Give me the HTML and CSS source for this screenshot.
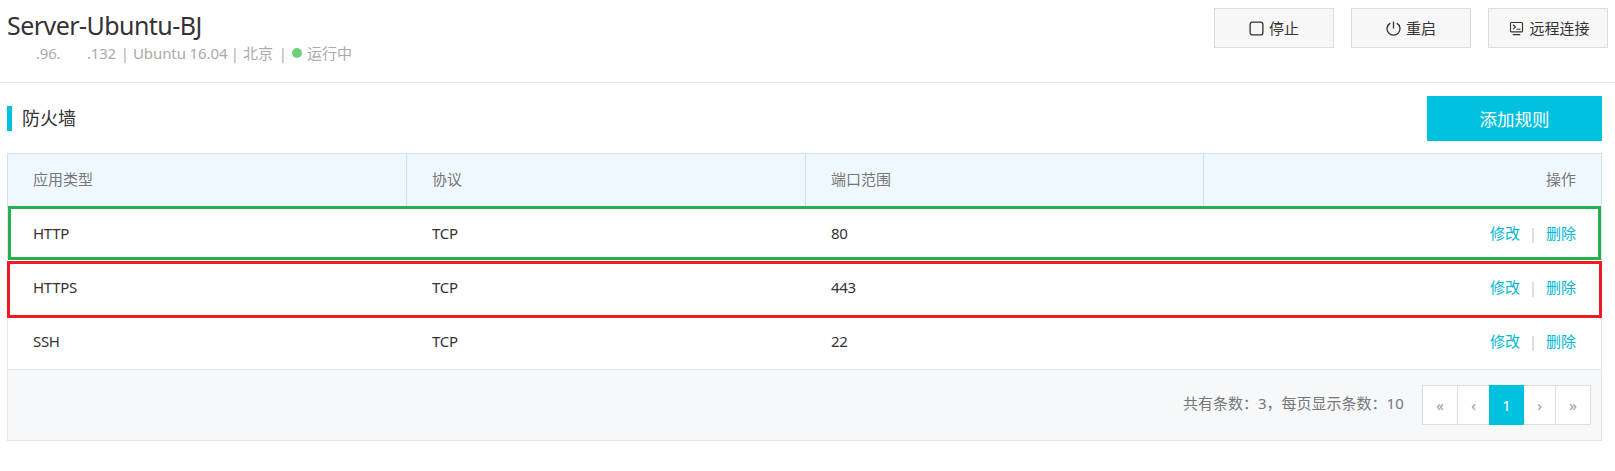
FILE: index.html
```html
<!DOCTYPE html>
<html lang="zh-CN">
<head>
<meta charset="utf-8">
<title>Server-Ubuntu-BJ</title>
<link rel="stylesheet" href="styles.css">
</head>
<body>
<header class="server">
  <div class="server-info">
    <h1 class="server-name">Server-Ubuntu-BJ</h1>
    <div class="server-meta">
      <span class="ip-a">.96.</span><span class="ip-b">.132</span><span class="bar">|</span><span class="os">Ubuntu 16.04</span><span class="bar">|</span><span class="region">北京</span><span class="bar">|</span><i class="dot"></i><span>运行中</span>
    </div>
  </div>
  <div class="server-actions">
    <button class="btn"><svg class="icon" viewBox="0 0 16 16"><rect x="1.2" y="1.2" width="13.6" height="13.6" rx="2.4"/></svg><span>停止</span></button>
    <button class="btn"><svg class="icon" viewBox="0 0 16 16"><path d="M8 .5v7.5M4.6 2.2a6.9 6.9 0 1 0 6.8 0"/></svg><span>重启</span></button>
    <button class="btn remote"><svg class="icon thin" viewBox="0 0 16 16"><rect x="1.6" y="1.6" width="12.8" height="10" rx="1"/><path d="M4.3 4l2.6 2.4-2.6 2.3M8 8.8h4.2M4 14.5h8"/></svg><span>远程连接</span></button>
  </div>
</header>
<main class="firewall">
  <div class="section-head">
    <h2 class="section-title">防火墙</h2>
    <button class="btn-add">添加规则</button>
  </div>
  <div class="rules">
    <div class="row head"><div>应用类型</div><div>协议</div><div>端口范围</div><div>操作</div></div>
    <div class="row mark-green"><div>HTTP</div><div>TCP</div><div>80</div><div class="ops"><a>修改</a><i>|</i><a>删除</a></div></div>
    <div class="row mark-red"><div>HTTPS</div><div>TCP</div><div>443</div><div class="ops"><a>修改</a><i>|</i><a>删除</a></div></div>
    <div class="row"><div>SSH</div><div>TCP</div><div>22</div><div class="ops"><a>修改</a><i>|</i><a>删除</a></div></div>
    <div class="foot">
      <span class="count">共有条数：3，每页显示条数：10</span>
      <div class="pager"><a class="wide">«</a><a>‹</a><a class="current">1</a><a>›</a><a class="wide">»</a></div>
    </div>
  </div>
</main>
</body>
</html>
```
FILE: styles.css
```css
* { box-sizing: border-box; }
body {
  margin: 0;
  background: #fff;
  color: #333;
  font: 400 15px/20px "Noto Sans", "Noto Sans CJK SC", sans-serif;
}
h1, h2 { margin: 0; font-weight: 400; }
i { font-style: normal; }
button { font: inherit; padding: 0; }

.server {
  display: flex;
  justify-content: space-between;
  height: 83px;
  padding: 8px 7px 0;
  border-bottom: 1px solid #e1e9f0;
}
.server-name {
  height: 34px;
  font-size: 25px;
  line-height: 35px;
  letter-spacing: -.55px;
}
.server-meta {
  display: flex;
  align-items: center;
  height: 22px;
  padding-left: 29px;
  color: #aaa;
  white-space: nowrap;
}
.ip-a { width: 51px; letter-spacing: -.2px; }
.ip-b { width: 30px; letter-spacing: -.2px; }
.os { width: 94px; letter-spacing: -.1px; }
.region { width: 32px; }
.bar { width: 16px; text-align: center; }
.dot {
  width: 10px;
  height: 10px;
  margin: 0 5px 0 1px;
  border-radius: 50%;
  background: #6fce7c;
}

.server-actions { display: flex; gap: 17px; }
.btn {
  display: flex;
  align-items: center;
  justify-content: center;
  gap: 5px;
  width: 120px;
  height: 40px;
  border: 1px solid #dcdcdc;
  background: #f7f7f7;
  color: #333;
}
.remote { padding-left: 3px; }
.icon {
  width: 15px;
  height: 15px;
  fill: none;
  stroke: #333;
  stroke-width: 1.4;
}
.thin { stroke-width: 1.2; }

.firewall { padding: 13px 13px 0 7px; }
.section-head {
  display: flex;
  align-items: center;
  justify-content: space-between;
  height: 45px;
  margin-bottom: 12px;
}
.section-title {
  height: 25px;
  padding-left: 10px;
  border-left: 5px solid #00c1de;
  font-size: 18px;
  line-height: 24px;
}
.btn-add {
  width: 175px;
  height: 45px;
  border: 0;
  background: #00c1de;
  color: #fff;
  font-size: 17.5px;
}

.rules { border: 1px solid #e1e6eb; border-top: 0; }
.row {
  display: grid;
  grid-template-columns: 399px 399px 398px 1fr;
  height: 54px;
  line-height: 52px;
  letter-spacing: -.3px;
}
.row > div { padding-left: 25px; }
.row > div:last-child { padding: 0 25px 0 0; text-align: right; }
.head {
  margin: 0 -1px;
  border: 1px solid #cbe2fa;
  border-bottom: 0;
  background: #f0f8ff;
  color: #777;
  line-height: 51px;
  letter-spacing: 0;
}
.head > div:not(:last-child) { border-right: 1px solid #cbe2fa; }
.row .ops {
  display: flex;
  justify-content: flex-end;
  color: #00b7d8;
  letter-spacing: 0;
}
.ops i { width: 26px; color: #ccc; text-align: center; }

/* Highlight frames are drawn over the row edges */
.mark-green, .mark-red { position: relative; }
.mark-green::after, .mark-red::after {
  content: "";
  position: absolute;
  pointer-events: none;
}
.mark-green::after { inset: -1px 0 1px; border: 3px solid #22b14c; }
.mark-red::after { inset: 0 -1px -3px; border: 3px solid #ed1c24; }

.foot {
  display: flex;
  justify-content: flex-end;
  height: 71px;
  padding: 15px 10px 0 0;
  border-top: 1px solid #e1e6eb;
  background: #f6f8fa;
  color: #777;
}
.count { width: 239px; line-height: 36px; white-space: nowrap; }
.pager {
  display: flex;
  width: 169px;
  height: 40px;
  border: 1px solid #ddd;
  background: #fff;
}
.pager a {
  width: 31px;
  color: #999;
  line-height: 38px;
  text-align: center;
}
.pager .wide { width: 35px; }
.pager .wide:first-child { border-right: 1px solid #ddd; }
.pager .wide:last-child { border-left: 1px solid #ddd; }
.pager .current {
  width: 35px;
  height: 40px;
  margin-top: -1px;
  background: #00c1de;
  color: #fff;
  line-height: 40px;
}
```
